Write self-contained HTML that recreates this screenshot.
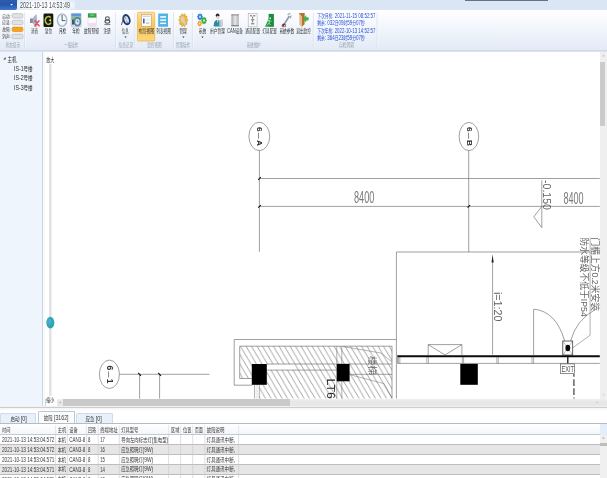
<!DOCTYPE html>
<html lang="zh-CN">
<head>
<meta charset="utf-8">
<title>2021-10-13 14:53:49</title>
<style>
html,body{margin:0;padding:0;background:#fff;}
body{width:607px;height:478px;overflow:hidden;position:relative;font-family:"Liberation Sans","Noto Sans CJK SC",sans-serif;}
#app{position:absolute;left:0;top:0;width:607px;height:478px;overflow:hidden;background:#fff;}
#titlebar{position:absolute;left:0;top:0;width:607px;height:10px;background:#dbe6f4;}
#appbtn{position:absolute;left:0;top:0;width:17px;height:9.5px;background:linear-gradient(#2c5cb0,#2756ac 45%,#3f78cb);border-radius:0 0 2px 0;}
#titleglow{position:absolute;left:17px;top:0;width:58px;height:10px;background:radial-gradient(ellipse at center,#ffffff 40%,rgba(255,255,255,0) 100%);}
#darkbar{position:absolute;left:465.3px;top:0;width:82.5px;height:1.3px;background:#61728a;}
#ribbon{position:absolute;left:0;top:10px;width:607px;height:39.5px;background:linear-gradient(#ffffff,#f6f9fd 30%,#e9f0f9 75%,#e3ebf6);}
#ribbonedge{position:absolute;left:0;top:49.5px;width:607px;height:2.5px;background:linear-gradient(#c9d3df,#e3e9f0);}
#tree{position:absolute;left:0;top:52px;width:42px;height:354.5px;background:#eef5fd;border-right:1px solid #cdd5de;box-sizing:content-box;}
#split{position:absolute;left:43px;top:52px;width:1.5px;height:355px;background:#f7f9fb;border-right:0.7px solid #d0d6dd;}
#canvas{position:absolute;left:45.3px;top:52px;width:554.7px;height:346.6px;background:#fff;}
#vscroll{position:absolute;left:600px;top:52px;width:7px;height:354.5px;background:#efefef;}
#vthumb{position:absolute;left:600.3px;top:61.8px;width:5px;height:63.8px;background:#cbcbcb;}
#hscroll{position:absolute;left:57px;top:398.7px;width:550px;height:7.3px;background:linear-gradient(#f0f0f0,#e7e7e7 40%,#e7e7e7);}
#hthumb{position:absolute;left:62.6px;top:398.8px;width:227.7px;height:7px;background:#c9c9c9;}
#hsplit{position:absolute;left:0;top:405.9px;width:607px;height:5.6px;background:linear-gradient(#f1f1f1 0,#f1f1f1 1.2px,#cdcdcd 1.3px,#cdcdcd 2.2px,#f5f5f5 2.3px,#ffffff 100%);}
#bottom{position:absolute;left:0;top:411.5px;width:607px;height:67px;background:#fff;}
.tab{position:absolute;top:412.5px;height:10.8px;background:#e8f1fb;border:0.6px solid #d0dbe7;border-bottom:none;box-sizing:border-box;border-radius:1.5px 1.5px 0 0;}
.tab.act{background:#fcfdff;top:411.4px;height:12.4px;border-color:#bcc7d4;}
#tabline{position:absolute;left:0;top:423px;width:607px;height:0.9px;background:#b7bcc3;}
#thead{position:absolute;left:0;top:424px;width:607px;height:10.4px;background:linear-gradient(#ffffff,#f3f6fa);border-bottom:0.8px solid #c4c9cf;}
#theadr{position:absolute;left:600px;top:424px;width:7px;height:10.6px;background:#e3eefa;}
.row{position:absolute;left:0;width:600px;height:9.85px;border-bottom:0.8px solid #bdbdbd;box-sizing:border-box;background:#fff;}
.row.alt{background:#e6e6e6;}
#tvscroll{position:absolute;left:600px;top:435px;width:7px;height:43px;background:#f0f0f0;}
#tvthumb{position:absolute;left:600px;top:443px;width:7px;height:2.6px;background:#bdbdbd;}
svg{position:absolute;left:0;top:0;will-change:transform;}
svg text{font-family:"Liberation Sans","Noto Sans CJK SC",sans-serif;white-space:pre;}
</style>
</head>
<body>
<div id="app">
<div id="titlebar"><div id="titleglow"></div><div id="appbtn"></div><div id="darkbar"></div></div>
<div id="ribbon"></div>
<div id="ribbonedge"></div>
<div id="tree"></div>
<div id="split"></div>
<div id="canvas"></div>
<div id="vscroll"></div><div id="vthumb"></div>
<div id="hscroll"></div><div id="hthumb"></div>
<div id="hsplit"></div>
<div id="bottom"></div>
<div class="tab" style="left:0.3px;width:35.8px"></div>
<div class="tab act" style="left:37.6px;width:37px"></div>
<div class="tab" style="left:76px;width:36.8px"></div>
<div id="tabline"></div>
<div id="thead"></div><div id="theadr"></div>

<div class="row" style="top:435.20px"></div>
<div class="row alt" style="top:445.05px"></div>
<div class="row" style="top:454.90px"></div>
<div class="row alt" style="top:464.75px"></div>
<div class="row" style="top:474.60px"></div>
<div id="tvscroll"></div><div id="tvthumb"></div>
<svg width="607" height="478" viewBox="0 0 607 478">
<path d="M10.2 3.9 L13 3.9 L11.6 5.6 Z" fill="#fff"/>
<text x="20.0" y="8.00" font-size="8.6" fill="#4a4f58" textLength="50.0" lengthAdjust="spacingAndGlyphs" >2021-10-13 14:53:49</text>
<text x="2.2" y="17.56" font-size="4.9" fill="#3a3a3a" textLength="8.4" lengthAdjust="spacingAndGlyphs" >启动:</text>
<rect x="12.2" y="13.6" width="10.6" height="4.4" rx="1.2" fill="#e2e3e0" stroke="#a9b0b8" stroke-width="0.6"/>
<text x="2.2" y="24.16" font-size="4.9" fill="#3a3a3a" textLength="8.4" lengthAdjust="spacingAndGlyphs" >应急:</text>
<rect x="12.2" y="20.2" width="10.6" height="4.4" rx="1.2" fill="#e2e3e0" stroke="#a9b0b8" stroke-width="0.6"/>
<text x="2.2" y="31.06" font-size="4.9" fill="#3a3a3a" textLength="8.4" lengthAdjust="spacingAndGlyphs" >故障:</text>
<rect x="12.2" y="27.1" width="10.6" height="4.4" rx="1.2" fill="#f9a21c" stroke="#d98a10" stroke-width="0.6"/>
<text x="2.2" y="38.16" font-size="4.9" fill="#3a3a3a" textLength="8.4" lengthAdjust="spacingAndGlyphs" >消声:</text>
<rect x="12.2" y="34.2" width="10.6" height="4.4" rx="1.2" fill="#e2e3e0" stroke="#a9b0b8" stroke-width="0.6"/>
<text x="5.4" y="46.94" font-size="5.4" fill="#9aa3b0" textLength="14.7" lengthAdjust="spacingAndGlyphs" >状态提示</text>
<text x="64.3" y="46.94" font-size="5.4" fill="#9aa3b0" textLength="13.9" lengthAdjust="spacingAndGlyphs" >一般操作</text>
<text x="118.7" y="46.94" font-size="5.4" fill="#9aa3b0" textLength="14.3" lengthAdjust="spacingAndGlyphs" >信息记录</text>
<text x="147.3" y="46.94" font-size="5.4" fill="#9aa3b0" textLength="14.3" lengthAdjust="spacingAndGlyphs" >监控视图</text>
<text x="176.0" y="46.94" font-size="5.4" fill="#9aa3b0" textLength="14.0" lengthAdjust="spacingAndGlyphs" >管理操作</text>
<text x="246.7" y="46.94" font-size="5.4" fill="#9aa3b0" textLength="13.9" lengthAdjust="spacingAndGlyphs" >系统维护</text>
<text x="339.0" y="46.94" font-size="5.4" fill="#9aa3b0" textLength="15.1" lengthAdjust="spacingAndGlyphs" >自检周期</text>
<path d="M24.8 12.5 V47.5" stroke="#c9d4e2" stroke-width="0.7"/>
<path d="M25.5 12.5 V47.5" stroke="#ffffff" stroke-width="0.6"/>
<path d="M115.8 12.5 V47.5" stroke="#c9d4e2" stroke-width="0.7"/>
<path d="M116.5 12.5 V47.5" stroke="#ffffff" stroke-width="0.6"/>
<path d="M135 12.5 V47.5" stroke="#c9d4e2" stroke-width="0.7"/>
<path d="M135.7 12.5 V47.5" stroke="#ffffff" stroke-width="0.6"/>
<path d="M173.5 12.5 V47.5" stroke="#c9d4e2" stroke-width="0.7"/>
<path d="M174.2 12.5 V47.5" stroke="#ffffff" stroke-width="0.6"/>
<path d="M192.4 12.5 V47.5" stroke="#c9d4e2" stroke-width="0.7"/>
<path d="M193.1 12.5 V47.5" stroke="#ffffff" stroke-width="0.6"/>
<path d="M313.4 12.5 V47.5" stroke="#c9d4e2" stroke-width="0.7"/>
<path d="M314.09999999999997 12.5 V47.5" stroke="#ffffff" stroke-width="0.6"/>
<path d="M377.2 12.5 V47.5" stroke="#c9d4e2" stroke-width="0.7"/>
<path d="M377.9 12.5 V47.5" stroke="#ffffff" stroke-width="0.6"/>
<defs><linearGradient id="hb" x1="0" y1="0" x2="0" y2="1"><stop offset="0" stop-color="#fde2a0"/><stop offset="0.45" stop-color="#fbc758"/><stop offset="1" stop-color="#fdd67c"/></linearGradient><linearGradient id="gsrv" x1="0" y1="0" x2="1" y2="0"><stop offset="0" stop-color="#a3a6ab"/><stop offset="0.5" stop-color="#e6e8ea"/><stop offset="1" stop-color="#adb0b5"/></linearGradient><radialGradient id="knob" cx="0.4" cy="0.4" r="0.7"><stop offset="0" stop-color="#5aa8e0"/><stop offset="0.6" stop-color="#27a9b2"/><stop offset="1" stop-color="#1f9aa0"/></radialGradient><pattern id="hatch" width="5.5" height="9.4" patternUnits="userSpaceOnUse" patternTransform="translate(240.5,346.2)"><path d="M0 0 L5.5 9.4 M-5.5 0 L0 9.4 M5.5 0 L11 9.4" stroke="#585858" stroke-width="0.55"/></pattern></defs>
<rect x="137.4" y="12.2" width="17.3" height="28.9" rx="1.2" fill="url(#hb)" stroke="#e6b146" stroke-width="0.7"/>
<text x="31.0" y="33.04" font-size="5.4" fill="#2f3338" textLength="7.0" lengthAdjust="spacingAndGlyphs" >消音</text>
<text x="44.9" y="33.04" font-size="5.4" fill="#2f3338" textLength="7.1" lengthAdjust="spacingAndGlyphs" >复位</text>
<text x="58.9" y="33.04" font-size="5.4" fill="#2f3338" textLength="7.4" lengthAdjust="spacingAndGlyphs" >月检</text>
<text x="72.2" y="33.04" font-size="5.4" fill="#2f3338" textLength="7.4" lengthAdjust="spacingAndGlyphs" >年检</text>
<text x="84.1" y="33.04" font-size="5.4" fill="#2f3338" textLength="14.8" lengthAdjust="spacingAndGlyphs" >故障预留</text>
<text x="103.4" y="33.04" font-size="5.4" fill="#2f3338" textLength="7.4" lengthAdjust="spacingAndGlyphs" >注册</text>
<text x="121.7" y="33.04" font-size="5.4" fill="#2f3338" textLength="6.9" lengthAdjust="spacingAndGlyphs" >信息</text>
<text x="138.4" y="33.04" font-size="5.4" fill="#2f3338" textLength="15.8" lengthAdjust="spacingAndGlyphs" >布局视图</text>
<text x="156.2" y="33.04" font-size="5.4" fill="#2f3338" textLength="14.8" lengthAdjust="spacingAndGlyphs" >列表视图</text>
<text x="179.4" y="33.04" font-size="5.4" fill="#2f3338" textLength="7.4" lengthAdjust="spacingAndGlyphs" >管理</text>
<text x="198.8" y="33.04" font-size="5.4" fill="#2f3338" textLength="7.4" lengthAdjust="spacingAndGlyphs" >系统</text>
<text x="210.1" y="33.04" font-size="5.4" fill="#2f3338" textLength="14.9" lengthAdjust="spacingAndGlyphs" >用户管理</text>
<text x="227.0" y="33.04" font-size="5.4" fill="#2f3338" textLength="15.8" lengthAdjust="spacingAndGlyphs" ><tspan font-size="6.4">CAN</tspan>设备</text>
<text x="245.3" y="33.04" font-size="5.4" fill="#2f3338" textLength="14.8" lengthAdjust="spacingAndGlyphs" >通道配置</text>
<text x="262.5" y="33.04" font-size="5.4" fill="#2f3338" textLength="14.4" lengthAdjust="spacingAndGlyphs" >灯具配置</text>
<text x="279.4" y="33.04" font-size="5.4" fill="#2f3338" textLength="14.8" lengthAdjust="spacingAndGlyphs" >系统参数</text>
<text x="296.2" y="33.04" font-size="5.4" fill="#2f3338" textLength="14.8" lengthAdjust="spacingAndGlyphs" >退出监控</text>
<path d="M124.5 36.6 h2.2 l-1.1 1.4 z" fill="#333"/>
<path d="M182.3 36.6 h2.2 l-1.1 1.4 z" fill="#333"/>
<path d="M201.4 36.6 h2.2 l-1.1 1.4 z" fill="#333"/>
<g><path d="M30 18.6 h2.8 l3.4 -4.4 q1.2 6.6 0 13.2 l-3.4 -4.4 h-2.8 z" fill="#7f8ba3"/><path d="M32.8 18.6 l3.4 -4.4 q1.2 6.6 0 13.2 l-3.4 -4.4 z" fill="#aab5c9"/><path d="M35 20.8 l4 5 M39 20.8 l-4 5" stroke="#e2505c" stroke-width="1.6" stroke-linecap="round"/></g>
<g><rect x="43.5" y="13.6" width="9.8" height="13.4" rx="1.3" fill="#15180c"/><path d="M50.6 17.6 a3.1 3.9 0 1 0 0.4 5" fill="none" stroke="#b6c04a" stroke-width="1.7"/><path d="M48.6 20.2 l2.6 -1.8 v3.6 z" fill="#d5dc6a"/></g>
<g><ellipse cx="62.1" cy="20.1" rx="4.7" ry="6.2" fill="#eef6fb" stroke="#a6bac9" stroke-width="1.4"/><ellipse cx="62.1" cy="20.1" rx="3.6" ry="4.9" fill="#f6fbfe" stroke="#d5e2ec" stroke-width="0.4"/><path d="M62.1 15 V20.6 H65.4" fill="none" stroke="#2a2f36" stroke-width="0.8"/></g>
<g><rect x="71.2" y="13.4" width="9.9" height="13.4" rx="0.8" fill="#dbe7f2" stroke="#8fa6bd" stroke-width="0.5"/><rect x="71.4" y="13.6" width="9.5" height="3" fill="#5d97d6"/><rect x="71.4" y="16.6" width="9.5" height="3.4" fill="#86bd7f"/><rect x="72" y="19.6" width="2.4" height="5" fill="#44546a"/><ellipse cx="77.4" cy="21.8" rx="3.2" ry="4.3" fill="#5c86ae" stroke="#40648a" stroke-width="0.6"/><ellipse cx="77.4" cy="21.8" rx="2.1" ry="3" fill="#dcebf6"/><path d="M77.4 19.8 V22 H78.6" fill="none" stroke="#345" stroke-width="0.5"/></g>
<g><path d="M88 13.4 h8.4 v11.4 a2 2 0 0 1 -2 2 h-4.4 a2 2 0 0 1 -2 -2 z" fill="#fdfbfd" stroke="#c9ccd2" stroke-width="0.5"/><path d="M88.2 23 h8 v1.8 a1.8 1.8 0 0 1 -1.8 1.8 h-4.4 a1.8 1.8 0 0 1 -1.8 -1.8 z" fill="#f3dcee"/><rect x="88" y="13.4" width="8.4" height="4.2" fill="#2fa046"/><rect x="90" y="14.6" width="4.4" height="0.9" fill="#9fe0a6"/></g>
<g fill="none" stroke="#4f545b" stroke-width="1.1"><ellipse cx="107.4" cy="18.6" rx="1.9" ry="1.9"/><ellipse cx="107.4" cy="21.6" rx="2.4" ry="1.7"/><path d="M104.4 24.6 h6" stroke="#6b7078" stroke-width="0.9"/></g>
<g fill="none"><ellipse cx="126.5" cy="19.6" rx="3" ry="4.7" transform="rotate(-18 126.5 19.6)" stroke="#1f3a72" stroke-width="1.9"/><path d="M121.4 25 L124.4 15.4 L127.6 23.6" stroke="#3a4f78" stroke-width="0.9"/><ellipse cx="126.9" cy="19.4" rx="1.4" ry="2.4" transform="rotate(-18 126.9 19.4)" fill="#cfdcee"/></g>
<g><rect x="141.4" y="14.4" width="9.8" height="11.9" fill="#fdfdfd" stroke="#b99a5a" stroke-width="0.6"/><rect x="142.6" y="15.6" width="7.4" height="1.4" fill="#c9d8ee"/><rect x="143" y="18.6" width="1.6" height="4.8" fill="#3b62b5"/><rect x="145.6" y="18.6" width="4" height="2.2" fill="#e9eef6"/><rect x="146" y="22.6" width="3.4" height="0.9" fill="#8aa0c8"/></g>
<g><rect x="158.2" y="13.4" width="9.8" height="13.4" rx="0.6" fill="#4fb3e6"/><rect x="160.2" y="16.2" width="5.8" height="1.5" fill="#fff"/><rect x="160.2" y="19.4" width="5.8" height="1.5" fill="#fff"/><rect x="160.2" y="22.6" width="5.8" height="1.5" fill="#fff"/></g>
<g><path d="M187.90 20.20 L186.71 21.84 L187.02 24.20 L185.41 24.49 L184.72 26.67 L183.30 25.50 L181.88 26.67 L181.19 24.49 L179.58 24.20 L179.89 21.84 L178.70 20.20 L179.89 18.56 L179.58 16.20 L181.19 15.91 L181.88 13.73 L183.30 14.90 L184.72 13.73 L185.41 15.91 L187.02 16.20 L186.71 18.56 Z" fill="#e9b92f" stroke="#c9961a" stroke-width="0.5"/><ellipse cx="182.6" cy="19.4" rx="2.2" ry="3.2" fill="#e7c9b0"/><ellipse cx="184.6" cy="23" rx="1.3" ry="1.8" fill="#d8c6e6"/></g>
<g><path d="M203.00 16.80 L202.16 17.87 L202.12 19.35 L200.90 19.39 L200.00 20.40 L199.10 19.39 L197.88 19.35 L197.84 17.87 L197.00 16.80 L197.84 15.73 L197.88 14.25 L199.10 14.21 L200.00 13.20 L200.90 14.21 L202.12 14.25 L202.16 15.73 Z" fill="#2f7fd6"/><ellipse cx="200" cy="16.8" rx="1" ry="1.2" fill="#bfe0ff"/><path d="M207.00 20.60 L206.16 21.76 L206.12 23.36 L204.90 23.41 L204.00 24.50 L203.10 23.41 L201.88 23.36 L201.84 21.76 L201.00 20.60 L201.84 19.44 L201.88 17.84 L203.10 17.79 L204.00 16.70 L204.90 17.79 L206.12 17.84 L206.16 19.44 Z" fill="#35b045"/><ellipse cx="204" cy="20.6" rx="1" ry="1.3" fill="#c9f3c9"/><path d="M202.10 23.60 L201.40 24.53 L201.37 25.79 L200.35 25.83 L199.60 26.70 L198.85 25.83 L197.83 25.79 L197.80 24.53 L197.10 23.60 L197.80 22.67 L197.83 21.41 L198.85 21.37 L199.60 20.50 L200.35 21.37 L201.37 21.41 L201.40 22.67 Z" fill="#f0a62c"/><ellipse cx="199.6" cy="23.6" rx="0.8" ry="1" fill="#ffe3b0"/></g>
<g><ellipse cx="217.6" cy="15.6" rx="1.9" ry="2" fill="#2c2c34"/><ellipse cx="217.7" cy="17.4" rx="1.5" ry="1.7" fill="#f0d3c0"/><path d="M213.6 26.4 q0 -6.6 4 -6.6 q4 0 4 6.6 z" fill="#2a8f9c"/><path d="M219.2 19.6 h3.8 v6.6 h-3.8 z" fill="#c9ccd6" opacity="0.85"/><path d="M217 19.6 l0.8 3.6 l0.8 -3.6 z" fill="#e8f3f6"/></g>
<g><rect x="231.4" y="14.4" width="7.4" height="11.9" fill="url(#gsrv)"/><rect x="231.4" y="14.4" width="7.4" height="1" fill="#85888d"/><rect x="231.4" y="25" width="7.4" height="1.3" fill="#85888d"/></g>
<g><rect x="248.2" y="13.4" width="8.9" height="13.4" fill="#fafafa" stroke="#a9adb3" stroke-width="0.6"/><path d="M250 15.8 h2 M253 15.8 h2.4 M252.6 16.6 v2 M251 19.8 h3.4 M252.6 20.6 v1.8 M251 23.8 h3.4" stroke="#3f444b" stroke-width="0.8"/></g>
<g><rect x="268.6" y="13.9" width="5.3" height="12.9" fill="#1d8a3c"/><path d="M265 26.8 L269.4 17 L269.4 26.8 Z" fill="#27a04a"/><ellipse cx="270.2" cy="18.2" rx="0.8" ry="1" fill="#d9f5df"/><path d="M267.6 21 l2.2 -0.8 l1.6 1.6 M269.6 20.6 l-0.6 2.6 l-1.6 1.6 M269 23.2 l1.6 1.8" stroke="#d9f5df" stroke-width="0.7" fill="none"/></g>
<g fill="none"><path d="M284 24.6 L289.4 16" stroke="#8f98a6" stroke-width="1.7"/><path d="M287.6 15 q1.2 -1.6 2.8 -1.2 M290.8 15.6 q0.6 1.4 -0.8 2.6" stroke="#9aa3b0" stroke-width="1.2"/><path d="M282.6 26.4 l1.8 -2.6" stroke="#7a2a2e" stroke-width="1.6"/><path d="M282.2 24.4 h3.4 v2.2 h-3.4 z" stroke="#6d2a30" stroke-width="0.6"/></g>
<g><path d="M299.4 13.6 h5.2 v10.6 l-3 2.8 v-10.6 z" fill="#b9722d"/><path d="M299.4 13.6 l2.2 2.8 v10.6 l-2.2 -2.8 z" fill="#e5b983"/><rect x="299" y="13.4" width="5.8" height="0.8" fill="#8d5a2a"/><path d="M308.4 17.4 h-2.4 v-1.8 l-2.8 3.2 l2.8 3.2 v-1.8 h2.4 z" fill="#3bb54a" stroke="#2a9138" stroke-width="0.3"/></g>
<text x="317.2" y="17.99" font-size="5.8" fill="#2b50d6" textLength="58.3" lengthAdjust="spacingAndGlyphs" >下次月检<tspan font-size="6.8">: 2021-11-15 08:52:57</tspan></text>
<text x="317.2" y="25.49" font-size="5.8" fill="#2b50d6" textLength="47.5" lengthAdjust="spacingAndGlyphs" >剩余<tspan font-size="6.8">: 032</tspan>日<tspan font-size="6.8">09</tspan>时<tspan font-size="6.8">59</tspan>分<tspan font-size="6.8">07</tspan>秒</text>
<text x="317.2" y="32.59" font-size="5.8" fill="#2b50d6" textLength="58.3" lengthAdjust="spacingAndGlyphs" >下次年检<tspan font-size="6.8">: 2022-10-13 14:52:57</tspan></text>
<text x="317.2" y="39.89" font-size="5.8" fill="#2b50d6" textLength="47.5" lengthAdjust="spacingAndGlyphs" >剩余<tspan font-size="6.8">: 364</tspan>日<tspan font-size="6.8">23</tspan>时<tspan font-size="6.8">59</tspan>分<tspan font-size="6.8">07</tspan>秒</text>
<path d="M3.4 59.4 L5.6 57 L5.6 59.4 Z" fill="#3a3a3a"/>
<text x="7.5" y="61.57" font-size="6.3" fill="#2b2b2b" textLength="9.1" lengthAdjust="spacingAndGlyphs" >主机</text>
<text x="14.0" y="71.03" font-size="6.2" fill="#2b2b2b" textLength="18.6" lengthAdjust="spacingAndGlyphs" ><tspan font-size="7.2">IS-1</tspan>号楼</text>
<text x="14.0" y="80.43" font-size="6.2" fill="#2b2b2b" textLength="18.6" lengthAdjust="spacingAndGlyphs" ><tspan font-size="7.2">IS-2</tspan>号楼</text>
<text x="14.0" y="89.83" font-size="6.2" fill="#2b2b2b" textLength="18.6" lengthAdjust="spacingAndGlyphs" ><tspan font-size="7.2">IS-3</tspan>号楼</text>
<text x="46.2" y="62.47" font-size="5.2" fill="#222" textLength="8.2" lengthAdjust="spacingAndGlyphs" >放大</text>
<text x="46.2" y="402.47" font-size="5.2" fill="#222" textLength="8.2" lengthAdjust="spacingAndGlyphs" >缩小</text>
<rect x="49" y="64" width="2.6" height="332" fill="#e3e3e3"/>
<ellipse cx="50.3" cy="322.6" rx="4" ry="5.9" fill="url(#knob)"/>
<path d="M60.6 401.2 l-1.8 1.3 l1.8 1.3 z" fill="#b5b5b5"/>
<path d="M596.6 401.2 l1.8 1.3 l-1.8 1.3 z" fill="#c9c9c9"/>
<path d="M603.5 396 l-1.4 -1.8 h2.8 z" fill="#cfcfcf"/>
<path d="M603.5 54.6 l-1.4 1.8 h2.8 z" fill="#c5c5c5"/>
<path d="M603.5 437 l-1.4 1.8 h2.8 z" fill="#b0b0b0"/>
<g id="cad" fill="none" stroke="#5f5f5f" stroke-width="0.6">
<ellipse cx="259.3" cy="136.4" rx="10.4" ry="14.2"/>
<ellipse cx="468.9" cy="136.5" rx="9.8" ry="14.1"/>
<ellipse cx="109.4" cy="374.3" rx="10" ry="14.2"/>
<path d="M259.4 150.6 V251.8 M468.7 150.6 V252"/>
<path d="M259.4 178.5 H599.8 M259.4 206.4 H599.8"/>
<path d="M258.2 179.8 L260.8 177.2 M258.2 207.7 L260.8 205.1 M467.5 207.7 L470.1 205.1" stroke="#111" stroke-width="1.1"/>
<path d="M541.8 180.4 V227.7 M541.8 206.4 L533.8 216.8 L541.8 227.6"/>
<path d="M396.4 398.6 V252 H590 "/>
<path d="M590.1 237.6 V335.2 L572.8 347.8" stroke-width="0.5"/>
<path d="M492.6 262 V354.6"/>
<path d="M492.6 254.4 L491.5 262.4 H493.7 Z" fill="#222" stroke="none"/>
<path d="M533.6 355 V309.2 Q556 311 564.7 341"/>
<path d="M570.6 341 Q576 320 596 309"/>
<rect x="562.8" y="341" width="9.9" height="14" stroke="#333" stroke-width="0.75"/>
<path d="M562.8 341 L572.7 355 M572.7 341 L562.8 355" stroke-width="0.4"/>
<ellipse cx="567.8" cy="348" rx="2.4" ry="3.3" fill="#0a0a0a" stroke="none"/>
<path d="M567.8 357 V363.6" stroke="#111" stroke-width="1.3"/>
<rect x="560.6" y="363.9" width="14.1" height="9.5" stroke="#444"/>
<path d="M573.9 374 V398.6" stroke="#5a5a5a" stroke-width="1.4" stroke-dasharray="6.7 2.4" stroke-dashoffset="3.9"/>
<path d="M397.4 356.2 H599.8" stroke="#0c0c0c" stroke-width="2"/>
<path d="M397.6 363.4 H599.8 M397.6 354.8 V363.4"/>
<path d="M398.6 357 V363.4 M399.9 357 V363.4 M426.8 357 V363.4 M428.4 357 V363.4 M462.3 357 V363.4 M463.6 357 V363.4 M496.8 357 V363.4 M498.3 357 V363.4 M532 357 V363.4 M533.6 357 V363.4" stroke-width="0.5"/>
<path d="M428.2 355 V344.6 H461.9 V355 M428.2 344.6 L445 355 L461.9 344.6"/>
<rect x="460.3" y="363.9" width="17.5" height="20.9" fill="#000" stroke="none"/>
<path d="M119.4 374.3 H209.4 M139.6 374.3 V398.6 M159.6 374.3 V398.6"/>
<path d="M138.2 372.8 L141 375.8 M158.2 372.8 L161 375.8" stroke="#111" stroke-width="1.1"/>
<path d="M240 346.2 H392 V398.6 H259.3 V385 H252 V378.5 H240 Z" fill="url(#hatch)" stroke="none"/>
<rect x="267" y="364.3" width="28" height="5.6" fill="#fff" stroke="none"/>
<path d="M252 385.2 H234.2 V339.5 H396.4"/>
<path d="M252 378.5 H239.7 V346.2 H392 V398.6"/>
<path d="M267 364 H392 M267 370.1 H336.8 M349.6 374.3 H392"/>
<path d="M336.8 346.2 V398.6 M341.8 346.2 V364 M341.8 381.3 V398.6" stroke-width="0.5"/>
<path d="M254.6 385 V398.6 M259.3 385 V398.6" stroke-width="0.5"/><path d="M257 385 V398.6" stroke-width="0.4" stroke-dasharray="0.8 0.8"/>
<path d="M343 346.6 L381 353 L392 362 M349.6 374.6 L384 383.6 L392 398" stroke-width="0.45"/>
<rect x="251.8" y="364" width="15" height="20.8" fill="#000" stroke="none"/>
<rect x="336.8" y="364" width="12.8" height="17.3" fill="#000" stroke="none"/>
</g>
<text x="354.0" y="203.43" font-size="16.2" fill="#626262" fill-opacity="0.85" textLength="20.3" lengthAdjust="spacingAndGlyphs" font-weight="400">8400</text>
<text x="563.5" y="203.53" font-size="16.2" fill="#626262" fill-opacity="0.85" textLength="20.1" lengthAdjust="spacingAndGlyphs" >8400</text>
<g transform="translate(547.40,180.00) rotate(90)"><text x="0" y="4.10" font-size="11.4" fill="#626262" textLength="30.0" lengthAdjust="spacingAndGlyphs" >-0.150</text></g>
<g transform="translate(497.60,292.00) rotate(90)"><text x="0" y="3.89" font-size="10.8" fill="#626262" textLength="29.4" lengthAdjust="spacingAndGlyphs" >i=1:20</text></g>
<g transform="translate(260.10,126.90) rotate(90)"><text x="0" y="2.74" font-size="7.6" fill="#2a2a2a" textLength="19.1" lengthAdjust="spacingAndGlyphs" font-weight="700">6<tspan font-size="5.4" dx="1.2">—</tspan><tspan dx="1.2">A</tspan></text></g>
<g transform="translate(469.50,126.90) rotate(90)"><text x="0" y="2.74" font-size="7.6" fill="#2a2a2a" textLength="19.1" lengthAdjust="spacingAndGlyphs" font-weight="700">6<tspan font-size="5.4" dx="1.2">—</tspan><tspan dx="1.2">B</tspan></text></g>
<g transform="translate(109.60,365.40) rotate(90)"><text x="0" y="2.95" font-size="8.2" fill="#333" textLength="18.2" lengthAdjust="spacingAndGlyphs" font-weight="700">6<tspan font-size="5.8" dx="1.2">—</tspan><tspan dx="1.2">1</tspan></text></g>
<g transform="translate(595.20,237.50) rotate(90)"><text x="0" y="3.38" font-size="9.4" fill="#666" textLength="73.5" lengthAdjust="spacingAndGlyphs" >门楣上方0.2米安装</text></g>
<g transform="translate(584.20,237.50) rotate(90)"><text x="0" y="3.38" font-size="9.4" fill="#666" textLength="79.3" lengthAdjust="spacingAndGlyphs" >防水等级不低于IP54</text></g>
<g transform="translate(330.60,378.50) rotate(90)"><text x="0" y="3.78" font-size="10.5" fill="#222" textLength="20.5" lengthAdjust="spacingAndGlyphs" >LT6</text></g>
<g transform="translate(372.30,356.00) rotate(90)"><text x="0" y="3.46" font-size="9.6" fill="#707070" textLength="19.0" lengthAdjust="spacingAndGlyphs" >楼梯</text></g>
<text x="561.4" y="371.80" font-size="8.6" fill="#555" textLength="12.6" lengthAdjust="spacingAndGlyphs" >EXIT</text>
<text x="10.4" y="420.62" font-size="5.9" fill="#383838" textLength="16.4" lengthAdjust="spacingAndGlyphs" >启动 <tspan font-size="7">[0]</tspan></text>
<text x="43.8" y="420.42" font-size="5.9" fill="#383838" textLength="24.8" lengthAdjust="spacingAndGlyphs" >故障 <tspan font-size="7">[3162]</tspan></text>
<text x="85.4" y="420.62" font-size="5.9" fill="#383838" textLength="16.4" lengthAdjust="spacingAndGlyphs" >应急 <tspan font-size="7">[0]</tspan></text>
<text x="2.0" y="431.65" font-size="5.7" fill="#383838" textLength="8.4" lengthAdjust="spacingAndGlyphs" >时间</text>
<text x="57.7" y="431.65" font-size="5.7" fill="#383838" textLength="8.4" lengthAdjust="spacingAndGlyphs" >主机</text>
<text x="69.3" y="431.65" font-size="5.7" fill="#383838" textLength="8.4" lengthAdjust="spacingAndGlyphs" >设备</text>
<text x="88.1" y="431.65" font-size="5.7" fill="#383838" textLength="7.9" lengthAdjust="spacingAndGlyphs" >回路</text>
<text x="100.2" y="431.65" font-size="5.7" fill="#383838" textLength="17.5" lengthAdjust="spacingAndGlyphs" >终端地址</text>
<text x="121.3" y="431.65" font-size="5.7" fill="#383838" textLength="17.1" lengthAdjust="spacingAndGlyphs" >灯具型号</text>
<text x="171.1" y="431.65" font-size="5.7" fill="#383838" textLength="8.3" lengthAdjust="spacingAndGlyphs" >区域</text>
<text x="183.0" y="431.65" font-size="5.7" fill="#383838" textLength="8.3" lengthAdjust="spacingAndGlyphs" >位置</text>
<text x="195.1" y="431.65" font-size="5.7" fill="#383838" textLength="7.6" lengthAdjust="spacingAndGlyphs" >页面</text>
<text x="206.8" y="431.65" font-size="5.7" fill="#383838" textLength="17.6" lengthAdjust="spacingAndGlyphs" >故障说明</text>
<path d="M55.6 425 V434" stroke="#d5dae0" stroke-width="0.6"/>
<path d="M55.6 435 V478" stroke="#c9c9c9" stroke-width="0.6"/>
<path d="M67.3 425 V434" stroke="#d5dae0" stroke-width="0.6"/>
<path d="M67.3 435 V478" stroke="#c9c9c9" stroke-width="0.6"/>
<path d="M86.4 425 V434" stroke="#d5dae0" stroke-width="0.6"/>
<path d="M86.4 435 V478" stroke="#c9c9c9" stroke-width="0.6"/>
<path d="M98.2 425 V434" stroke="#d5dae0" stroke-width="0.6"/>
<path d="M98.2 435 V478" stroke="#c9c9c9" stroke-width="0.6"/>
<path d="M119.3 425 V434" stroke="#d5dae0" stroke-width="0.6"/>
<path d="M119.3 435 V478" stroke="#c9c9c9" stroke-width="0.6"/>
<path d="M168.6 425 V434" stroke="#d5dae0" stroke-width="0.6"/>
<path d="M168.6 435 V478" stroke="#c9c9c9" stroke-width="0.6"/>
<path d="M180.6 425 V434" stroke="#d5dae0" stroke-width="0.6"/>
<path d="M180.6 435 V478" stroke="#c9c9c9" stroke-width="0.6"/>
<path d="M192.7 425 V434" stroke="#d5dae0" stroke-width="0.6"/>
<path d="M192.7 435 V478" stroke="#c9c9c9" stroke-width="0.6"/>
<path d="M204.8 425 V434" stroke="#d5dae0" stroke-width="0.6"/>
<path d="M204.8 435 V478" stroke="#c9c9c9" stroke-width="0.6"/>
<path d="M238.6 425 V434" stroke="#d5dae0" stroke-width="0.6"/>
<path d="M238.6 435 V478" stroke="#c9c9c9" stroke-width="0.6"/>
<text x="2.0" y="442.16" font-size="7.1" fill="#383838" textLength="52.4" lengthAdjust="spacingAndGlyphs" >2021-10-13 14:53:04.572</text>
<text x="57.7" y="441.80" font-size="6.1" fill="#383838" textLength="8.3" lengthAdjust="spacingAndGlyphs" >本机</text>
<text x="69.3" y="442.16" font-size="7.1" fill="#383838" textLength="15.8" lengthAdjust="spacingAndGlyphs" >CAN3-8</text>
<text x="88.1" y="442.16" font-size="7.1" fill="#383838" textLength="2.4" lengthAdjust="spacingAndGlyphs" >8</text>
<text x="100.2" y="442.16" font-size="7.1" fill="#383838" textLength="4.7" lengthAdjust="spacingAndGlyphs" >17</text>
<text x="121.3" y="441.80" font-size="6.1" fill="#383838" textLength="46.9" lengthAdjust="spacingAndGlyphs" >导向左向标志灯<tspan font-size="7">(</tspan>集电型<tspan font-size="7">)</tspan></text>
<text x="206.4" y="441.80" font-size="6.1" fill="#383838" textLength="28.8" lengthAdjust="spacingAndGlyphs" >灯具通讯中断<tspan font-size="7">,</tspan></text>
<text x="2.0" y="452.01" font-size="7.1" fill="#383838" textLength="52.4" lengthAdjust="spacingAndGlyphs" >2021-10-13 14:53:04.572</text>
<text x="57.7" y="451.65" font-size="6.1" fill="#383838" textLength="8.3" lengthAdjust="spacingAndGlyphs" >本机</text>
<text x="69.3" y="452.01" font-size="7.1" fill="#383838" textLength="15.8" lengthAdjust="spacingAndGlyphs" >CAN3-8</text>
<text x="88.1" y="452.01" font-size="7.1" fill="#383838" textLength="2.4" lengthAdjust="spacingAndGlyphs" >8</text>
<text x="100.2" y="452.01" font-size="7.1" fill="#383838" textLength="4.7" lengthAdjust="spacingAndGlyphs" >16</text>
<text x="121.3" y="451.65" font-size="6.1" fill="#383838" textLength="31.9" lengthAdjust="spacingAndGlyphs" >应急照明灯<tspan font-size="7">(9W)</tspan></text>
<text x="206.4" y="451.65" font-size="6.1" fill="#383838" textLength="28.8" lengthAdjust="spacingAndGlyphs" >灯具通讯中断<tspan font-size="7">,</tspan></text>
<text x="2.0" y="461.86" font-size="7.1" fill="#383838" textLength="52.4" lengthAdjust="spacingAndGlyphs" >2021-10-13 14:53:04.571</text>
<text x="57.7" y="461.50" font-size="6.1" fill="#383838" textLength="8.3" lengthAdjust="spacingAndGlyphs" >本机</text>
<text x="69.3" y="461.86" font-size="7.1" fill="#383838" textLength="15.8" lengthAdjust="spacingAndGlyphs" >CAN3-8</text>
<text x="88.1" y="461.86" font-size="7.1" fill="#383838" textLength="2.4" lengthAdjust="spacingAndGlyphs" >8</text>
<text x="100.2" y="461.86" font-size="7.1" fill="#383838" textLength="4.7" lengthAdjust="spacingAndGlyphs" >15</text>
<text x="121.3" y="461.50" font-size="6.1" fill="#383838" textLength="31.9" lengthAdjust="spacingAndGlyphs" >应急照明灯<tspan font-size="7">(9W)</tspan></text>
<text x="206.4" y="461.50" font-size="6.1" fill="#383838" textLength="28.8" lengthAdjust="spacingAndGlyphs" >灯具通讯中断<tspan font-size="7">,</tspan></text>
<text x="2.0" y="471.71" font-size="7.1" fill="#383838" textLength="52.4" lengthAdjust="spacingAndGlyphs" >2021-10-13 14:53:04.571</text>
<text x="57.7" y="471.35" font-size="6.1" fill="#383838" textLength="8.3" lengthAdjust="spacingAndGlyphs" >本机</text>
<text x="69.3" y="471.71" font-size="7.1" fill="#383838" textLength="15.8" lengthAdjust="spacingAndGlyphs" >CAN3-8</text>
<text x="88.1" y="471.71" font-size="7.1" fill="#383838" textLength="2.4" lengthAdjust="spacingAndGlyphs" >8</text>
<text x="100.2" y="471.71" font-size="7.1" fill="#383838" textLength="4.7" lengthAdjust="spacingAndGlyphs" >14</text>
<text x="121.3" y="471.35" font-size="6.1" fill="#383838" textLength="31.9" lengthAdjust="spacingAndGlyphs" >应急照明灯<tspan font-size="7">(9W)</tspan></text>
<text x="206.4" y="471.35" font-size="6.1" fill="#383838" textLength="28.8" lengthAdjust="spacingAndGlyphs" >灯具通讯中断<tspan font-size="7">,</tspan></text>
<text x="2.0" y="481.56" font-size="7.1" fill="#383838" textLength="52.4" lengthAdjust="spacingAndGlyphs" >2021-10-13 14:53:04.571</text>
<text x="57.7" y="481.20" font-size="6.1" fill="#383838" textLength="8.3" lengthAdjust="spacingAndGlyphs" >本机</text>
<text x="69.3" y="481.56" font-size="7.1" fill="#383838" textLength="15.8" lengthAdjust="spacingAndGlyphs" >CAN3-8</text>
<text x="88.1" y="481.56" font-size="7.1" fill="#383838" textLength="2.4" lengthAdjust="spacingAndGlyphs" >8</text>
<text x="100.2" y="481.56" font-size="7.1" fill="#383838" textLength="4.7" lengthAdjust="spacingAndGlyphs" >13</text>
<text x="121.3" y="481.20" font-size="6.1" fill="#383838" textLength="31.9" lengthAdjust="spacingAndGlyphs" >应急照明灯<tspan font-size="7">(9W)</tspan></text>
<text x="206.4" y="481.20" font-size="6.1" fill="#383838" textLength="28.8" lengthAdjust="spacingAndGlyphs" >灯具通讯中断<tspan font-size="7">,</tspan></text>
</svg>
</div>
</body>
</html>
